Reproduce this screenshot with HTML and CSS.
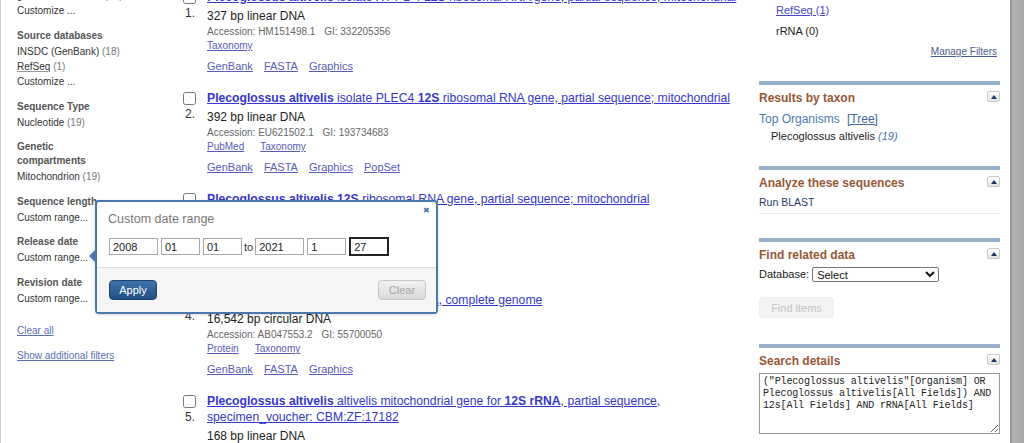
FILE: index.html
```html
<!DOCTYPE html>
<html lang="en">
  <head>
    <meta charset="UTF-8" />
    <meta name="viewport" content="width=device-width, initial-scale=1.0" />
    <title>Nucleotide - search results</title>
    <link rel="stylesheet" href="styles.css">
  </head>
  <body>
    <div class="page">
      <!-- left filter column -->
      <div class="filters">
        <div class="group top">
          <h4>Molecule types</h4>
          <p>genomic DNA/RNA <span class="count">(19)</span></p>
          <p>Customize ...</p>
        </div>
        <div class="group src">
          <h4>Source databases</h4>
          <p>INSDC (GenBank) <span class="count">(18)</span></p>
          <p><span class="dotted">RefSeq</span> <span class="count">(1)</span></p>
          <p>Customize ...</p>
        </div>
        <div class="group">
          <h4>Sequence Type</h4>
          <p>Nucleotide <span class="count">(19)</span></p>
        </div>
        <div class="group">
          <h4>Genetic<br />compartments</h4>
          <p>Mitochondrion <span class="count">(19)</span></p>
        </div>
        <div class="group">
          <h4>Sequence length</h4>
          <p>Custom range...</p>
        </div>
        <div class="group">
          <h4>Release date</h4>
          <p>Custom range...</p>
        </div>
        <div class="group">
          <h4>Revision date</h4>
          <p>Custom range...</p>
        </div>
        <p class="clear"><a href="#">Clear all</a></p>
        <p class="more"><a href="#">Show additional filters</a></p>
      </div>

      <!-- results list -->
      <div class="results">
        <div class="rslt">
          <div class="mark"><input type="checkbox" /><span>1.</span></div>
          <div class="body">
            <p class="title"><a href="#"><b>Plecoglossus altivelis</b> isolate XY-PL-4 <b>12S</b> ribosomal RNA gene, partial sequence; mitochondrial</a></p>
            <p class="desc">327 bp linear DNA</p>
            <p class="acc">Accession: HM151498.1 <span class="gi">GI: 332205356</span></p>
            <p class="links"><a href="#">Taxonomy</a></p>
            <p class="links2"><a href="#">GenBank</a><a href="#">FASTA</a><a href="#">Graphics</a></p>
          </div>
        </div>
        <div class="rslt">
          <div class="mark"><input type="checkbox" /><span>2.</span></div>
          <div class="body">
            <p class="title"><a href="#"><b>Plecoglossus altivelis</b> isolate PLEC4 <b>12S</b> ribosomal RNA gene, partial sequence; mitochondrial</a></p>
            <p class="desc">392 bp linear DNA</p>
            <p class="acc">Accession: EU621502.1 <span class="gi">GI: 193734683</span></p>
            <p class="links"><a href="#">PubMed</a><a href="#">Taxonomy</a></p>
            <p class="links2"><a href="#">GenBank</a><a href="#">FASTA</a><a href="#">Graphics</a><a href="#">PopSet</a></p>
          </div>
        </div>
        <div class="rslt">
          <div class="mark"><input type="checkbox" /><span>3.</span></div>
          <div class="body">
            <p class="title"><a href="#"><b>Plecoglossus altivelis</b> <b>12S</b> ribosomal RNA gene, partial sequence; mitochondrial</a></p>
            <p class="desc">958 bp linear DNA</p>
            <p class="acc">Accession: AY256612.1 <span class="gi">GI: 30144508</span></p>
            <p class="links"><a href="#">Taxonomy</a></p>
            <p class="links2"><a href="#">GenBank</a><a href="#">FASTA</a><a href="#">Graphics</a></p>
          </div>
        </div>
        <div class="rslt">
          <div class="mark"><input type="checkbox" /><span>4.</span></div>
          <div class="body">
            <p class="title"><a href="#"><b>Plecoglossus altivelis</b> mitochondrial DNA, complete genome</a></p>
            <p class="desc">16,542 bp circular DNA</p>
            <p class="acc">Accession: AB047553.2 <span class="gi">GI: 55700050</span></p>
            <p class="links"><a href="#">Protein</a><a href="#">Taxonomy</a></p>
            <p class="links2"><a href="#">GenBank</a><a href="#">FASTA</a><a href="#">Graphics</a></p>
          </div>
        </div>
        <div class="rslt">
          <div class="mark"><input type="checkbox" /><span>5.</span></div>
          <div class="body">
            <p class="title"><a href="#"><b>Plecoglossus altivelis</b> altivelis mitochondrial gene for <b>12S rRNA</b>, partial sequence, specimen_voucher: CBM:ZF:17182</a></p>
            <p class="desc">168 bp linear DNA</p>
          </div>
        </div>
      </div>

      <!-- right column -->
      <div class="side">
        <ul class="dblist">
          <li><a href="#">INSDC (GenBank) (18)</a></li>
          <li><a href="#">RefSeq (1)</a></li>
          <li>rRNA (0)</li>
        </ul>
        <p class="manage"><a href="#">Manage Filters</a></p>

        <div class="portlet taxon">
          <h3>Results by taxon <span class="toggle"></span></h3>
          <p class="orgs">Top Organisms <a href="#">[Tree]</a></p>
          <p class="org">Plecoglossus altivelis <i>(19)</i></p>
        </div>

        <div class="portlet analyze">
          <h3>Analyze these sequences <span class="toggle"></span></h3>
          <p class="blast">Run BLAST</p>
        </div>

        <div class="portlet related">
          <h3>Find related data <span class="toggle"></span></h3>
          <div class="dbrow">
            <label for="db">Database:</label>
            <select id="db"><option>Select</option></select>
          </div>
          <button class="find" disabled>Find items</button>
        </div>

        <div class="portlet search">
          <h3>Search details <span class="toggle"></span></h3>
          <textarea class="details">("Plecoglossus altivelis"[Organism] OR Plecoglossus altivelis[All Fields]) AND 12s[All Fields] AND rRNA[All Fields]</textarea>
        </div>
      </div>

      <div class="edge"></div>
    </div>

    <!-- date range popup -->
    <div class="popup">
      <span class="close">&#x2716;</span>
      <span class="arrow"></span>
      <h2>Custom date range</h2>
      <div class="dates">
        <input class="yr" type="text" value="2008" />
        <input type="text" value="01" />
        <input type="text" value="01" />
        <span class="to">to</span>
        <input class="yr" type="text" value="2021" />
        <input type="text" value="1" />
        <input class="focus" type="text" value="27" />
      </div>
      <div class="foot">
        <button class="apply">Apply</button>
        <button class="clearbtn">Clear</button>
      </div>
    </div>
  </body>
</html>
```

FILE: styles.css
```css
body {
  margin: 0;
  font-family: "Liberation Sans", Arial, sans-serif;
  color: #333;
  background: #fff;
  overflow: hidden;
  height: 443px;
}
p {
  margin: 0;
}
a {
  color: inherit;
}

.page {
  display: flex;
  align-items: flex-start;
  height: 443px;
}

/* left filters */
.filters {
  flex: none;
  width: 166px;
  padding-left: 16px;
  border-left: 1px solid #cfcfcf;
  margin-top: -27px;
  padding-bottom: 200px;
  font-size: 10px;
  color: #333;
}
.group {
  margin-top: 10.5px;
}
.group.top {
  margin-top: 0;
}
.group.src {
  margin-top: 11px;
}
.group h4 {
  margin: 0 0 1px;
  font-size: 10px;
  line-height: 14px;
  color: #555;
}
.group p {
  line-height: 15px;
}
.count {
  color: #777;
}
.dotted {
  text-decoration: underline;
  text-decoration-color: #999;
}
.clear {
  margin-top: 17px;
  line-height: 15px;
}
.more {
  margin-top: 10px;
  line-height: 15px;
}
.clear a,
.more a {
  color: #5a6db5;
}

/* results */
.results {
  flex: none;
  width: 576px;
  margin-top: -11px;
}
.rslt {
  display: flex;
}
.mark {
  flex: none;
  width: 24px;
}
.mark input {
  display: block;
  margin: 2px 0 0 0;
  width: 13px;
  height: 13px;
}
.mark span {
  display: block;
  margin: 2px 0 0 2px;
  font-size: 12px;
  line-height: 14px;
  color: #333;
}
.body {
  flex: 1;
  padding-bottom: 17px;
}
.title {
  font-size: 12.2px;
  line-height: 16px;
}
.title a {
  color: #3636cc;
}
.desc {
  margin-top: 3px;
  font-size: 12px;
  line-height: 16px;
  color: #222;
}
.acc {
  margin-top: 1px;
  font-size: 10px;
  line-height: 14px;
  color: #666;
}
.gi {
  margin-left: 6px;
}
.links,
.links2 {
  display: flex;
  color: #5a5ab8;
}
.links {
  gap: 16px;
  font-size: 10px;
  line-height: 14px;
}
.links2 {
  gap: 11px;
  margin-top: 6px;
  font-size: 11px;
  line-height: 14px;
}

/* right column */
.side {
  flex: none;
  width: 241px;
  margin-top: -21.5px;
  font-size: 11px;
}
.dblist {
  list-style: none;
  margin: 0;
  padding: 0 0 0 17px;
}
.dblist li {
  line-height: 21px;
  color: #222;
}
.dblist a {
  color: #4646cf;
}
.manage {
  margin-top: 3.5px;
  text-align: right;
  font-size: 10px;
  line-height: 14px;
  padding-right: 3px;
}
.manage a {
  color: #4b5a8c;
}
.portlet {
  margin-top: 22px;
  border-top: 4px solid #98b0c8;
}
.portlet h3 {
  display: flex;
  justify-content: space-between;
  align-items: flex-start;
  margin: 5px 0 0;
  font-size: 12px;
  line-height: 16px;
  color: #985735;
}
.toggle {
  position: relative;
  box-sizing: border-box;
  width: 13px;
  height: 11px;
  margin-top: 1px;
  border: 1px solid #c9c9c9;
  border-radius: 2px;
  background: linear-gradient(#ffffff, #e4e4e4);
}
.toggle::after {
  content: "";
  position: absolute;
  left: 2.5px;
  top: 2.5px;
  border-left: 3.5px solid transparent;
  border-right: 3.5px solid transparent;
  border-bottom: 4px solid #1d3565;
}
.orgs {
  margin-top: 5px;
  font-size: 12px;
  line-height: 16px;
  color: #4a7ab5;
}
.orgs a {
  margin-left: 4px;
  color: #3f64a0;
}
.org {
  margin-top: 1px;
  padding-left: 12px;
  font-size: 11px;
  line-height: 16px;
  color: #222;
}
.org i {
  color: #4a6fae;
}
.portlet.analyze {
  margin-top: 22px;
}
.blast {
  margin-top: 4px;
  padding-bottom: 4px;
  border-bottom: 1px solid #e6e6e6;
  font-size: 10.5px;
  line-height: 14px;
  color: #283a6c;
}
.portlet.related {
  margin-top: 24px;
}
.dbrow {
  display: flex;
  align-items: center;
  gap: 3px;
  margin-top: 3px;
  height: 16px;
  color: #222;
}
.dbrow select {
  width: 127px;
  height: 15px;
  padding: 0;
  font-size: 11px;
  font-family: "Liberation Sans", Arial, sans-serif;
  border: 1px solid #777;
  border-radius: 2px;
  background: #fff;
  color: #111;
}
.find {
  display: block;
  margin-top: 15px;
  width: 75px;
  height: 21px;
  border: 1px solid #eeeeee;
  border-radius: 4px;
  background: #f3f3f3;
  color: #c4c4c4;
  font-size: 11px;
  font-family: "Liberation Sans", Arial, sans-serif;
}
.portlet.search {
  margin-top: 26px;
}
.details {
  display: block;
  box-sizing: border-box;
  margin-top: 4px;
  width: 241px;
  height: 61px;
  padding: 2px 3px;
  border: 1px solid #999;
  font-family: "Liberation Mono", monospace;
  font-size: 10px;
  line-height: 12px;
  letter-spacing: -0.15px;
  color: #222;
  resize: vertical;
}

.edge {
  flex: none;
  margin-left: 10px;
  width: 14px;
  height: 443px;
  background: linear-gradient(to right, #8f8f8f, #b3b3b3 25%, #a9a9a9);
}

/* date range popup */
.popup {
  position: absolute;
  left: 95px;
  top: 200px;
  box-sizing: border-box;
  width: 343px;
  height: 114px;
  border: 2px solid #4a78a9;
  border-radius: 4px;
  background: #fff;
  box-shadow: 0 1px 3px rgba(0, 0, 0, 0.15);
}
.popup h2 {
  margin: 9px 0 0 11px;
  font-size: 12.5px;
  line-height: 16px;
  font-weight: normal;
  color: #777;
}
.close {
  position: absolute;
  right: 6px;
  top: 4px;
  font-size: 8px;
  color: #4a78a9;
}
.arrow {
  position: absolute;
  left: -8px;
  top: 48px;
  border-top: 6px solid transparent;
  border-bottom: 6px solid transparent;
  border-right: 6px solid #4a78a9;
}
.dates {
  display: flex;
  align-items: center;
  margin: 11px 0 0 12px;
  height: 17px;
}
.dates input {
  box-sizing: border-box;
  width: 39px;
  height: 17px;
  margin-right: 3px;
  padding: 0 3px;
  border: 1px solid #a9a9a9;
  font-size: 11px;
  font-family: "Liberation Sans", Arial, sans-serif;
  color: #222;
}
.dates input.yr {
  width: 49px;
}
.dates input.focus {
  margin-left: 1px;
  border: 1px solid #222;
  outline: 1px solid #222;
  width: 38px;
}
.to {
  margin: 0 2px 0 -1px;
  font-size: 11px;
  color: #333;
}
.foot {
  display: flex;
  justify-content: space-between;
  margin-top: 12px;
  padding: 12px 10px 0 12px;
  height: 32px;
  border-top: 1px solid #dedede;
  background: #f5f5f5;
}
.foot button {
  width: 48px;
  height: 20px;
  border-radius: 4px;
  font-size: 11px;
  font-family: "Liberation Sans", Arial, sans-serif;
}
.apply {
  border: 1px solid #1f4272;
  background: linear-gradient(#3f72aa, #234f85);
  color: #fff;
}
.clearbtn {
  border: 1px solid #c6c6c6;
  background: linear-gradient(#f2f2f2, #d9d9d9);
  color: #a5a5a5;
}
```
